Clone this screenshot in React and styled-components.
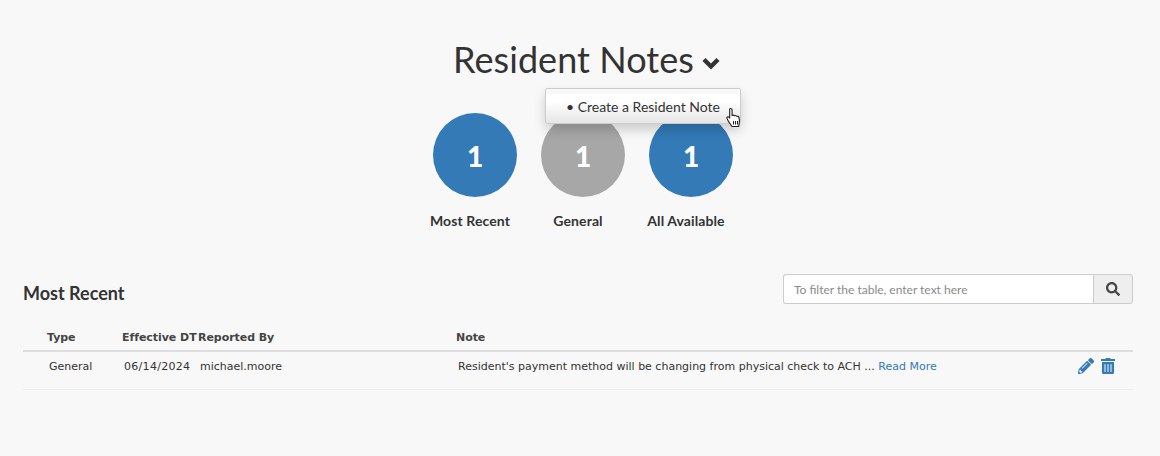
import React from "react";
import styled, { createGlobalStyle } from "styled-components";
import { FaPencilAlt, FaSearch, FaTrashAlt } from "react-icons/fa";

const GlobalStyle = createGlobalStyle`
  html, body {
    margin: 0;
    padding: 0;
    background: #f8f8f8;
    color: #333;
    font-family: Lato, "Liberation Sans", sans-serif;
  }
  * { box-sizing: border-box; }
`;

const Page = styled.main`
  width: 1160px;
  height: 456px;
  padding: 0 27px 0 23px;
  overflow: hidden;
`;

const TitleArea = styled.header`
  position: relative;
  display: flex;
  justify-content: center;
  padding: 38px 0 0 18px;
`;

const Title = styled.h1`
  display: flex;
  align-items: center;
  gap: 7px;
  margin: 0;
  height: 43px;
  font-size: 36px;
  font-weight: 400;
  line-height: 43px;
  letter-spacing: 0.05px;
  color: #333;
  svg { width: 20px; height: 16px; margin-top: 7px; }
`;

const Menu = styled.div`
  position: absolute;
  top: 88px;
  left: 522px;
  width: 196px;
  height: 36px;
  z-index: 2;
  padding: 6px 0 0 20px;
  background: linear-gradient(#f8f8f8 0, #f8f8f8 5px, #fff 5px, #fff 12px, #e6e6e6 100%);
  border: 1px solid #ccc;
  border-radius: 2px;
  box-shadow: 0 6px 12px rgba(0, 0, 0, 0.175);
  font-size: 14px;
  line-height: 24px;
  color: #333;
`;

const Pointer = styled.svg`
  position: absolute;
  top: 18px;
  left: 180px;
  width: 16px;
  height: 21px;
`;

const Stats = styled.section`
  display: flex;
  justify-content: center;
  gap: 24px;
  margin-top: 32px;
  padding-left: 10px;
`;

const Stat = styled.div`
  display: flex;
  flex-direction: column;
  align-items: center;
  width: 84px;
`;

const Circle = styled.div`
  display: flex;
  align-items: center;
  justify-content: center;
  width: 84px;
  height: 84px;
  padding-top: 1px;
  border-radius: 50%;
  background: ${(props) => (props.$muted ? "#a7a7a7" : "#337ab7")};
  color: #fff;
  font-size: 28px;
  font-weight: 900;
`;

const StatLabel = styled.div`
  margin: 14px 10px 0 0;
  font-size: 14px;
  font-weight: 700;
  line-height: 20px;
  letter-spacing: 0.1px;
  color: #333;
  white-space: nowrap;
`;

const TableHead = styled.div`
  display: flex;
  align-items: center;
  justify-content: space-between;
  margin-top: 43px;
  height: 30px;
`;

const TableTitle = styled.h2`
  margin: 8px 0 0;
  font-size: 18px;
  font-weight: 700;
  line-height: 20px;
  color: #333;
`;

const Filter = styled.div`
  display: flex;
  width: 350px;
  height: 30px;
`;

const FilterInput = styled.input`
  flex: 1;
  min-width: 0;
  height: 30px;
  padding: 0 10px;
  border: 1px solid #ccc;
  border-right: 0;
  border-radius: 3px 0 0 3px;
  background: #fff;
  font: 12px Lato, sans-serif;
  outline: none;
  &::placeholder { color: #8a8a8a; opacity: 1; }
`;

const FilterButton = styled.button`
  display: flex;
  align-items: center;
  justify-content: center;
  width: 40px;
  height: 30px;
  padding: 0;
  border: 1px solid #ccc;
  border-radius: 0 3px 3px 0;
  background: #eee;
  color: #444;
  svg { width: 14px; height: 14px; }
`;

const Table = styled.table`
  width: 1110px;
  margin-top: 18px;
  border-collapse: collapse;
  table-layout: fixed;
  font-family: "DejaVu Sans", Verdana, sans-serif;
  font-size: 11px;
  color: #333;
`;

const Th = styled.th`
  width: ${(props) => props.$w}px;
  height: 29px;
  padding: 3px 0 0 ${(props) => props.$pad || 0}px;
  border-bottom: 2px solid #ddd;
  color: #444;
  font-size: 11px;
  font-weight: 700;
  letter-spacing: -0.05px;
  text-align: left;
  white-space: nowrap;
  overflow: visible;
`;

const Td = styled.td`
  height: 38px;
  padding: 0 0 7px ${(props) => props.$pad || 0}px;
  border-bottom: 1px solid #efefef;
  white-space: nowrap;
`;

const DateText = styled.span`
  letter-spacing: 0.3px;
`;

const ReadMore = styled.a`
  color: #337ab7;
  text-decoration: none;
`;

const Actions = styled.div`
  display: flex;
  align-items: center;
  gap: 6px;
  margin-bottom: 2px;
  color: #337ab7;
  svg { height: 16px; width: auto; }
`;

export default function App() {
  return (
    <Page>
      <GlobalStyle />
      <TitleArea>
        <Title>
          Resident Notes
          <svg viewBox="0 0 20 16">
            <path d="M3 4.5l7 7 7-7" fill="none" stroke="#333" strokeWidth="4.4" />
          </svg>
        </Title>
        <Menu>
          • Create a Resident Note
          <Pointer viewBox="0 0 16 21">
            <path
              d="M4.5 1.5c1 0 1.6.7 1.6 1.6v5.4c.8-.5 1.8-.3 2.3.3.8-.4 1.8-.2 2.2.5.9-.3 2.1.1 2.4 1.2.5 1.8.6 3.3.3 5.1l-.6 3.9H6l-3.7-5.4L1 11.2c-.4-.9.7-2 1.7-1.2l1 1V3.1c0-.9-.1-1.6.8-1.6z"
              fill="#fff"
              stroke="#222"
              strokeWidth="1.1"
              strokeLinejoin="round"
            />
            <path d="M7.5 14v3.5M9.5 14v3.5M11.5 14v3.5" stroke="#222" strokeWidth="1" />
          </Pointer>
        </Menu>
      </TitleArea>
      <Stats>
        <Stat>
          <Circle>1</Circle>
          <StatLabel>Most Recent</StatLabel>
        </Stat>
        <Stat>
          <Circle $muted>1</Circle>
          <StatLabel>General</StatLabel>
        </Stat>
        <Stat>
          <Circle>1</Circle>
          <StatLabel>All Available</StatLabel>
        </Stat>
      </Stats>
      <TableHead>
        <TableTitle>Most Recent</TableTitle>
        <Filter>
          <FilterInput placeholder="To filter the table, enter text here" />
          <FilterButton>
            <FaSearch />
          </FilterButton>
        </Filter>
      </TableHead>
      <Table>
        <thead>
          <tr>
            <Th $w={98} $pad={24}>Type</Th>
            <Th $w={75} $pad={1}>Effective DT</Th>
            <Th $w={259} $pad={2}>Reported By</Th>
            <Th $w={622} $pad={1}>Note</Th>
            <Th $w={56} />
          </tr>
        </thead>
        <tbody>
          <tr>
            <Td $pad={26}>General</Td>
            <Td $pad={3}><DateText>06/14/2024</DateText></Td>
            <Td $pad={4}>michael.moore</Td>
            <Td $pad={3}>
              Resident's payment method will be changing from physical check to ACH ...{" "}
              <ReadMore href="#">Read More</ReadMore>
            </Td>
            <Td $pad={1}>
              <Actions>
                <FaPencilAlt />
                <FaTrashAlt />
              </Actions>
            </Td>
          </tr>
        </tbody>
      </Table>
    </Page>
  );
}
